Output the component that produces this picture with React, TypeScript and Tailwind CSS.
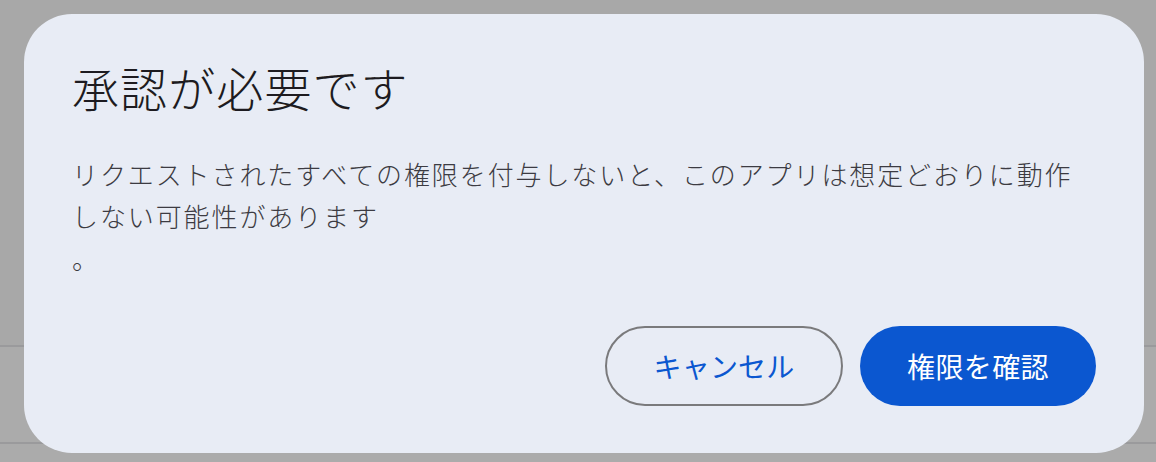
const rows = [
  { key: "top", className: "h-[345px] bg-[#a8a8a8]" },
  { key: "mid", className: "h-[97px] border-t-2 border-[#9a9a9c] bg-[#ababab]" },
  { key: "bottom", className: "flex-1 border-t-2 border-[#9a9a9c] bg-[#ababab]" },
];

function Backdrop() {
  return (
    <div className="flex h-full w-full flex-col">
      {rows.map((row) => (
        <div key={row.key} className={row.className} />
      ))}
    </div>
  );
}

function PermissionDialog() {
  return (
    <div className="absolute left-[24px] top-[14px] flex h-[439px] w-[1120px] flex-col rounded-[48px] bg-[#e8ecf5] px-[48px] pb-[47px] pt-[45px]">
      <h2 className="text-[47px] font-light leading-[56px] tracking-[1.1px] text-[#1d1b20]">
        承認が必要です
      </h2>
      <p className="mt-[38px] text-[26px] font-light leading-[42px] tracking-[1.9px] text-[#3c3b42]">
        リクエストされたすべての権限を付与しないと、このアプリは想定どおりに動作しない可能性があります
        <br />。
      </p>
      <div className="mt-auto flex items-center justify-end gap-[17px]">
        <button className="flex h-[80px] w-[238px] items-center justify-center rounded-full border-2 border-[#7a7a7c] text-[28px] tracking-[0.2px] text-[#0b57d0]">
          キャンセル
        </button>
        <button className="flex h-[80px] w-[236px] items-center justify-center rounded-full bg-[#0b57d0] text-[28px] tracking-[0.4px] text-white">
          権限を確認
        </button>
      </div>
    </div>
  );
}

export default function App() {
  return (
    <div className="relative h-[462px] w-[1156px] overflow-hidden font-['Noto_Sans_CJK_JP',sans-serif]">
      <Backdrop />
      <PermissionDialog />
    </div>
  );
}
